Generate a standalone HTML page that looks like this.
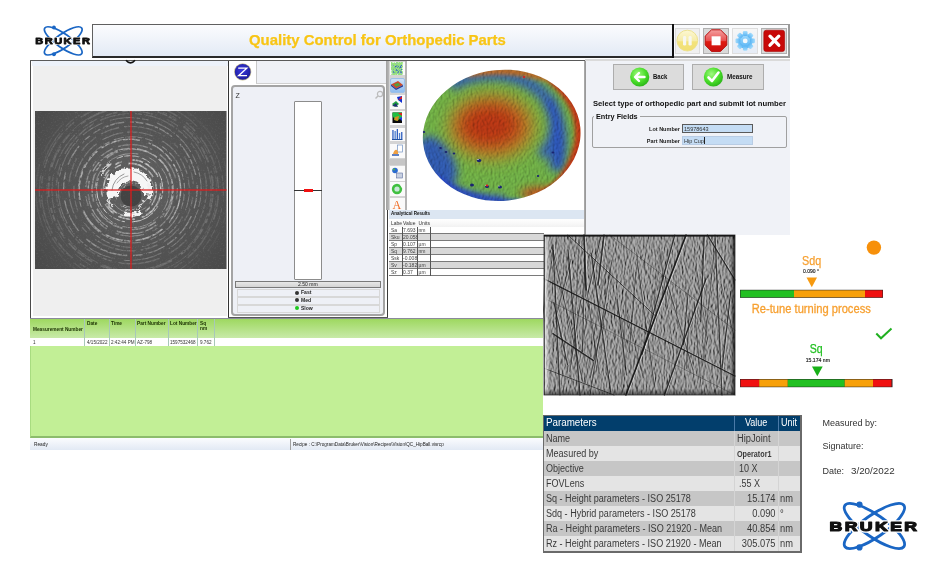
<!DOCTYPE html>
<html><head><meta charset="utf-8">
<style>
*{margin:0;padding:0;box-sizing:border-box}
html,body{width:950px;height:574px;overflow:hidden;background:#fff;font-family:"Liberation Sans",sans-serif;position:relative}
body{will-change:transform}
.a{position:absolute}
.t{position:absolute;white-space:nowrap;line-height:1}
</style></head><body>

<svg width="0" height="0" style="position:absolute"><defs>
<symbol id="brk" viewBox="0 0 96 54">
<g fill="none" stroke="#1a66c4">
<ellipse cx="48.4" cy="27" rx="36" ry="11" transform="rotate(35 48.4 27)" stroke-width="2.8"/>
<ellipse cx="48.4" cy="27" rx="36" ry="11" transform="rotate(-35 48.4 27)" stroke-width="2.8"/>
</g>
<circle cx="33.5" cy="5.6" r="3.1" fill="#1a66c4"/>
<circle cx="33.5" cy="48.4" r="3.1" fill="#1a66c4"/>
<g transform="translate(3.5 31.5) scale(1.3 1)"><text x="0" y="0" font-family="Liberation Sans" font-weight="bold" font-size="13.6" textLength="67.4" lengthAdjust="spacing" fill="#fff" stroke="#fff" stroke-width="3.5">BRUKER</text>
<text x="0" y="0" font-family="Liberation Sans" font-weight="bold" font-size="13.6" textLength="67.4" lengthAdjust="spacing" fill="#111" stroke="#111" stroke-width="1.2" stroke-linejoin="round">BRUKER</text></g>
</symbol></defs></svg>
<!-- top-left logo -->
<svg class="a" style="left:32.6px;top:23.5px" width="60" height="33.75"><use href="#brk"/></svg>

<!-- title bar -->
<div class="a" style="left:92px;top:24px;width:581px;height:34px;border:1px solid #606060;border-bottom:2px solid #2a2a2a;border-right:none;background:linear-gradient(#fbfcfe,#e3eaf5)"></div>
<div class="t" style="left:249px;top:31.6px;font-size:15.3px;font-weight:bold;color:#f8c515;-webkit-text-stroke:0.25px #f8c515;transform:scaleX(0.975);transform-origin:left">Quality Control for Orthopedic Parts</div>

<!-- toolbar -->
<div class="a" style="left:673px;top:24px;width:117px;height:34px;border:1px solid #9a9a9a;border-width:1px 2px 2px 0;background:#fafbfd"></div>
<div class="a" style="left:672px;top:24px;width:2px;height:34px;background:#111"></div>
<div class="a" style="left:674.5px;top:28px;width:25.5px;height:25.5px;background:#f0f0f0;border:1px solid #dcdcdc"></div>
<div class="a" style="left:703px;top:28px;width:26px;height:25.5px;background:#d9d9d9;border:1px solid #b0b0b0"></div>
<div class="a" style="left:732px;top:28px;width:26px;height:25.5px;background:linear-gradient(#f6f6f6,#e6ecf6);border:1px solid #dedede"></div>
<div class="a" style="left:761px;top:28px;width:25.5px;height:25.5px;background:#d9d9d9;border:1px solid #b0b0b0"></div>
<svg class="a" style="left:672px;top:24px" width="118" height="34" viewBox="672 24 118 34">
<defs>
<linearGradient id="gy" x1="0" y1="0" x2="0" y2="1"><stop offset="0" stop-color="#fdf8d4"/><stop offset="0.5" stop-color="#f6eca8"/><stop offset="0.56" stop-color="#f3e37c"/><stop offset="1" stop-color="#f1df74"/></linearGradient>
<linearGradient id="gr" x1="0" y1="0" x2="0" y2="1"><stop offset="0" stop-color="#f4a0a0"/><stop offset="0.5" stop-color="#e85050"/><stop offset="0.55" stop-color="#e01a10"/><stop offset="1" stop-color="#c81010"/></linearGradient>
</defs>
<circle cx="687.3" cy="40.6" r="10.4" fill="url(#gy)" stroke="#ece088" stroke-width="0.9"/>
<rect x="683" y="36" width="3.2" height="9.6" rx="1.4" fill="#f7f7f0"/>
<rect x="688.5" y="36" width="3.2" height="9.6" rx="1.4" fill="#f7f7f0"/>
<polygon points="711.5,29.8 720.5,29.8 726.8,36.1 726.8,45.1 720.5,51.4 711.5,51.4 705.2,45.1 705.2,36.1" fill="url(#gr)" stroke="#b81010" stroke-width="1"/>
<rect x="711.6" y="36.3" width="9" height="9" fill="#fff"/>
<defs><linearGradient id="gb" x1="0" y1="0" x2="0" y2="1"><stop offset="0" stop-color="#a6dcfc"/><stop offset="1" stop-color="#58b4f4"/></linearGradient></defs>
<g transform="translate(745.2 40.9)" fill="url(#gb)">
<circle r="7.4"/>
<g id="tooth"><rect x="-2.3" y="-9.8" width="4.6" height="5" rx="1.1"/></g>
<use href="#tooth" transform="rotate(45)"/><use href="#tooth" transform="rotate(90)"/><use href="#tooth" transform="rotate(135)"/><use href="#tooth" transform="rotate(180)"/><use href="#tooth" transform="rotate(225)"/><use href="#tooth" transform="rotate(270)"/><use href="#tooth" transform="rotate(315)"/>
</g>
<circle cx="745.2" cy="40.9" r="2.4" fill="#f4f8fc"/>
<rect x="763.8" y="30.2" width="20.8" height="21.4" rx="2.5" fill="#c80808" stroke="#a80000" stroke-width="0.6"/>
<path d="M770 36.2 L778.8 45.2 M778.8 36.2 L770 45.2" stroke="#fff" stroke-width="3.3" stroke-linecap="round"/>
</svg>

<!-- main window -->
<div class="a" style="left:30px;top:60px;width:555px;height:1px;background:#5a5a5a"></div>
<div class="a" style="left:585px;top:59px;width:205px;height:2px;background:#dadada"></div>

<!-- left panel -->
<div class="a" style="left:30px;top:61px;width:198px;height:257px;background:#fff;border-left:1.5px solid #4a4a4a"></div>
<div class="a" style="left:32px;top:61px;width:196px;height:5px;background:#edf2fa"></div>
<div class="a" style="left:33px;top:66px;width:194px;height:250px;background:#efefef"></div>
<svg class="a" style="left:124px;top:58px" width="13" height="8"><path d="M2 2.2 Q6.5 7.5 11 2.2" fill="none" stroke="#111" stroke-width="1.7"/></svg>
<svg class="a" style="left:34px;top:110px" width="193" height="160" viewBox="34 110 193 160">
<defs>
<radialGradient id="mg" cx="131" cy="188" r="120" gradientUnits="userSpaceOnUse">
<stop offset="0" stop-color="#5a5a5a"/><stop offset="0.4" stop-color="#555"/><stop offset="0.75" stop-color="#505050"/><stop offset="1" stop-color="#4a4a4a"/></radialGradient>
<radialGradient id="rg" cx="131" cy="190" r="5.5" gradientUnits="userSpaceOnUse" spreadMethod="repeat">
<stop offset="0" stop-color="#fff" stop-opacity="0"/><stop offset="0.45" stop-color="#fff" stop-opacity="0.05"/><stop offset="0.7" stop-color="#fff" stop-opacity="0.9"/><stop offset="0.85" stop-color="#fff" stop-opacity="0.2"/><stop offset="1" stop-color="#fff" stop-opacity="0"/></radialGradient>
<radialGradient id="fade" cx="131" cy="190" r="100" gradientUnits="userSpaceOnUse">
<stop offset="0" stop-color="#fff"/><stop offset="0.3" stop-color="#e0e0e0"/><stop offset="0.55" stop-color="#909090"/><stop offset="0.8" stop-color="#404040"/><stop offset="1" stop-color="#101010"/></radialGradient>
<filter id="spk" x="0" y="0" width="100%" height="100%"><feTurbulence type="fractalNoise" baseFrequency="0.3" numOctaves="3" seed="9"/><feColorMatrix values="2.6 0 0 0 -0.8  2.6 0 0 0 -0.8  2.6 0 0 0 -0.8  0 0 0 0 1"/></filter>
<mask id="spm" maskUnits="userSpaceOnUse" x="35" y="111" width="192" height="158"><rect x="35" y="111" width="192" height="158" filter="url(#spk)"/></mask>
<mask id="fdm" maskUnits="userSpaceOnUse" x="35" y="111" width="192" height="158"><rect x="35" y="111" width="192" height="158" fill="url(#fade)"/></mask>
<filter id="nz" x="0" y="0" width="100%" height="100%"><feTurbulence type="fractalNoise" baseFrequency="0.6" numOctaves="2" seed="3"/><feColorMatrix values="0 0 0 0 1  0 0 0 0 1  0 0 0 0 1  0 0 0 1.4 -0.75"/></filter>
<filter id="sb"><feGaussianBlur stdDeviation="0.5"/></filter>
<filter id="sb2" x="-50%" y="-50%" width="200%" height="200%"><feGaussianBlur stdDeviation="6"/></filter>
</defs>
<rect x="35" y="111" width="191.5" height="158" fill="url(#mg)"/>
<circle cx="131" cy="188" r="45" fill="#7a7a7a" opacity="0.15" filter="url(#sb2)"/>
<g mask="url(#fdm)" opacity="0.9"><g mask="url(#spm)"><g fill="none" stroke="#fff" filter="url(#sb)"><circle cx="131.7" cy="189.1" r="18.0" stroke-width="0.93" opacity="0.74" stroke-dasharray="9 5 9 2 17 3 18 9 7 8 11 10" stroke-dashoffset="42"/><circle cx="131.7" cy="190.5" r="22.2" stroke-width="0.69" opacity="0.70" stroke-dasharray="33 11 13 5 36 12 10 3 35 5 21 11" stroke-dashoffset="43"/><circle cx="129.9" cy="189.9" r="26.5" stroke-width="1.57" opacity="0.82" stroke-dasharray="29 3 41 11 20 8 7 7 30 5 22 10" stroke-dashoffset="4"/><circle cx="131.2" cy="189.6" r="29.7" stroke-width="1.66" opacity="0.81" stroke-dasharray="7 11 32 7 17 5 13 8 8 11 10 8" stroke-dashoffset="14"/><circle cx="129.7" cy="188.9" r="33.2" stroke-width="1.00" opacity="0.99" stroke-dasharray="31 7 32 7 12 2 44 10 10 8 37 11" stroke-dashoffset="20"/><circle cx="132.0" cy="190.6" r="37.1" stroke-width="0.70" opacity="0.85" stroke-dasharray="35 6 39 6 39 6 22 6 34 11 9 8" stroke-dashoffset="12"/><circle cx="132.2" cy="189.2" r="40.3" stroke-width="1.66" opacity="0.61" stroke-dasharray="43 6 26 9 33 8 40 8 42 9 29 3" stroke-dashoffset="11"/><circle cx="130.7" cy="191.0" r="42.6" stroke-width="1.35" opacity="0.69" stroke-dasharray="31 10 43 10 39 6 8 10 45 7 41 8" stroke-dashoffset="3"/><circle cx="131.5" cy="190.4" r="45.8" stroke-width="1.44" opacity="0.54" stroke-dasharray="28 6 15 6 35 9 29 10 22 8 10 9" stroke-dashoffset="40"/><circle cx="129.9" cy="190.1" r="50.8" stroke-width="1.47" opacity="0.99" stroke-dasharray="32 5 40 9 30 3 28 5 28 11 21 2" stroke-dashoffset="42"/><circle cx="131.5" cy="189.9" r="53.1" stroke-width="1.09" opacity="0.67" stroke-dasharray="23 8 26 5 40 10 41 3 27 4 10 11" stroke-dashoffset="38"/><circle cx="131.6" cy="189.7" r="57.7" stroke-width="1.16" opacity="0.55" stroke-dasharray="41 7 22 4 26 11 42 3 11 12 26 8" stroke-dashoffset="20"/><circle cx="131.1" cy="188.6" r="62.3" stroke-width="1.35" opacity="0.51" stroke-dasharray="7 10 29 9 25 9 20 6 19 5 43 11" stroke-dashoffset="46"/><circle cx="130.4" cy="188.8" r="66.8" stroke-width="1.37" opacity="0.98" stroke-dasharray="35 8 19 8 22 4 12 3 33 6 45 11" stroke-dashoffset="42"/><circle cx="129.7" cy="189.0" r="71.4" stroke-width="1.04" opacity="0.88" stroke-dasharray="43 6 23 8 39 9 45 3 10 3 43 5" stroke-dashoffset="1"/><circle cx="131.4" cy="188.7" r="75.1" stroke-width="1.36" opacity="0.64" stroke-dasharray="7 2 33 2 15 6 22 11 42 7 30 6" stroke-dashoffset="9"/><circle cx="131.5" cy="190.7" r="79.6" stroke-width="1.15" opacity="0.75" stroke-dasharray="38 9 13 7 39 5 43 4 21 4 17 4" stroke-dashoffset="44"/><circle cx="130.8" cy="189.2" r="82.2" stroke-width="1.79" opacity="0.84" stroke-dasharray="17 9 30 6 17 3 14 11 21 9 23 4" stroke-dashoffset="21"/><circle cx="131.8" cy="190.9" r="84.9" stroke-width="0.76" opacity="0.90" stroke-dasharray="18 9 42 11 39 7 26 2 32 7 19 11" stroke-dashoffset="17"/><circle cx="129.9" cy="190.8" r="88.5" stroke-width="1.53" opacity="0.95" stroke-dasharray="25 9 28 4 40 7 13 8 39 4 12 8" stroke-dashoffset="30"/><circle cx="131.4" cy="191.0" r="92.1" stroke-width="1.14" opacity="0.99" stroke-dasharray="18 8 23 12 21 2 23 7 35 8 41 4" stroke-dashoffset="44"/><circle cx="132.3" cy="191.0" r="96.5" stroke-width="1.39" opacity="0.71" stroke-dasharray="42 9 23 11 40 12 43 11 22 6 44 2" stroke-dashoffset="9"/></g></g></g>
<rect x="35" y="111" width="191.5" height="158" filter="url(#nz)" opacity="0.15"/>
<filter id="rag" x="-20%" y="-20%" width="140%" height="140%"><feTurbulence type="fractalNoise" baseFrequency="0.3" numOctaves="2" seed="2" result="t"/><feDisplacementMap in="SourceGraphic" in2="t" scale="6" xChannelSelector="R" yChannelSelector="G"/><feGaussianBlur stdDeviation="0.4"/></filter>
<circle cx="131" cy="196" r="10.5" fill="#2e2e2e" opacity="0.55" filter="url(#sb)"/>
<g filter="url(#rag)">
<path d="M108.4 198.9 A23 22 0 1 1 151.7 194.6 L143.0 194.0 A12 12 0 1 0 119.4 196.1 Z" fill="#f6f6f6"/>
<path d="M147 183 Q153 190 149 199" fill="none" stroke="#f0f0f0" stroke-width="3"/>
<path d="M124 213 A17 17 0 0 0 141 212" fill="none" stroke="#f4f4f4" stroke-width="3.2"/>
<path d="M121 205 A13 13 0 0 0 141 206" fill="none" stroke="#e0e0e0" stroke-width="1.2" opacity="0.7"/>
<path d="M144 200 A15 15 0 0 1 138 208" fill="none" stroke="#e8e8e8" stroke-width="1.6" opacity="0.8"/>
<path d="M101 175 A31 31 0 0 1 111 164" fill="none" stroke="#e8e8e8" stroke-width="2" opacity="0.8"/>
<path d="M113 207 A22 22 0 0 1 108 199" fill="none" stroke="#eee" stroke-width="2.2" opacity="0.85"/>
<path d="M123 188 A9 9 0 0 1 136 183" fill="none" stroke="#bbb" stroke-width="1" opacity="0.6"/>
</g>
<g fill="none" stroke="#666" stroke-linecap="round" opacity="0.75"><path d="M112 190 A19 19 0 0 1 124 174" stroke-width="0.9"/><path d="M134 172 A19 19 0 0 1 147 181" stroke-width="0.8"/><path d="M117 183 A16 16 0 0 1 128 176" stroke-width="0.7"/></g>
<rect x="130.4" y="111" width="1.2" height="158" fill="#e41a1a"/>
<rect x="35" y="189.4" width="191.5" height="1.2" fill="#e41a1a"/>
</svg>

<!-- Z panel -->
<div class="a" style="left:228px;top:61px;width:159px;height:257px;background:#fff;border-left:1.5px solid #333"></div>
<div class="a" style="left:256px;top:61px;width:131px;height:23px;background:#eff1f6;border-left:1px solid #c8c8c8;border-bottom:1px solid #d0d0d0"></div>
<div class="a" style="left:231px;top:85px;width:154px;height:231px;background:#eef0f6;border:2px solid #a4a4a4;border-radius:4px"></div>
<svg class="a" style="left:233px;top:62px" width="20" height="20" viewBox="233 62 20 20">
<defs><radialGradient id="zg" cx="0.45" cy="0.4" r="0.6"><stop offset="0" stop-color="#3a3ae0"/><stop offset="1" stop-color="#1c1c9a"/></radialGradient></defs>
<circle cx="242.7" cy="71.9" r="8.6" fill="#c8c090"/>
<circle cx="242.7" cy="71.9" r="7.9" fill="url(#zg)"/>
<path d="M238.2 68.2 H246.8 L238.6 75.7 H247" fill="none" stroke="#fff" stroke-width="1.3"/>
</svg>
<div class="t" style="left:235.5px;top:91.5px;font-size:7px;color:#333">Z</div>
<svg class="a" style="left:374px;top:90px" width="10" height="10"><circle cx="6" cy="4" r="2.6" fill="none" stroke="#bbb" stroke-width="1.2"/><path d="M4 6 L1.5 8.5" stroke="#bbb" stroke-width="1.5"/></svg>
<div class="a" style="left:294px;top:101px;width:28px;height:179px;background:#fff;border:1.5px solid #8c8c8c;border-radius:1px"></div>
<div class="a" style="left:294px;top:189.5px;width:28px;height:1.3px;background:#333"></div>
<div class="a" style="left:303.6px;top:188.6px;width:9px;height:3px;background:#f01010"></div>
<div class="a" style="left:235px;top:280.5px;width:146px;height:7.5px;background:linear-gradient(#e8e8e8,#d4d4d4);border:1px solid #7a7a7a"></div>
<div class="t" style="left:297.5px;top:281.6px;font-size:5.5px;color:#222;transform:scaleX(0.92);transform-origin:left">2.50 mm</div>
<div class="a" style="left:237px;top:289px;width:143px;height:7.5px;background:#eef0f6;border:1px solid #d8d8d8"></div>
<div class="a" style="left:237px;top:297px;width:143px;height:7.5px;background:#eef0f6;border:1px solid #d8d8d8"></div>
<div class="a" style="left:237px;top:305px;width:143px;height:7.5px;background:#eef0f6;border:1px solid #d8d8d8"></div>
<div class="a" style="left:294.5px;top:290.6px;width:4px;height:4px;border-radius:50%;background:#333"></div>
<div class="a" style="left:294.5px;top:298.4px;width:4px;height:4px;border-radius:50%;background:#333"></div>
<div class="a" style="left:294.5px;top:306.4px;width:4px;height:4px;border-radius:50%;background:#1ec81e"></div>
<div class="t" style="left:300.5px;top:290.4px;font-size:5.5px;font-weight:bold;color:#222;transform:scaleX(0.92);transform-origin:left">Fast</div>
<div class="t" style="left:300.5px;top:298.2px;font-size:5.5px;font-weight:bold;color:#222;transform:scaleX(0.92);transform-origin:left">Med</div>
<div class="t" style="left:300.5px;top:306.2px;font-size:5.5px;font-weight:bold;color:#222;transform:scaleX(0.92);transform-origin:left">Slow</div>

<!-- 3D / results -->
<div class="a" style="left:386.5px;top:61px;width:1.5px;height:257px;background:#3a3a3a"></div>
<div class="a" style="left:228px;top:317px;width:160px;height:1.5px;background:#555"></div>
<div class="a" style="left:388px;top:61px;width:197px;height:257px;background:#fff"></div>
<div class="a" style="left:386px;top:61px;width:3.3px;height:149px;background:linear-gradient(90deg,#a0a0a0,#b8b8b8)"></div>
<div class="a" style="left:389.3px;top:61px;width:15.4px;height:149px;background:#d4d4d4"></div>
<div class="a" style="left:404.5px;top:61px;width:2.4px;height:149px;background:#b4b4b4"></div>
<div class="a" style="left:389.5px;top:62.3px;width:15px;height:12.5px;background:#fafafa"></div>
<div class="a" style="left:389.5px;top:77.5px;width:15px;height:15.3px;background:linear-gradient(#cfe2f8,#8fbcee);border:1px solid #9cc0e8;border-radius:2px"></div>
<div class="a" style="left:389.5px;top:94.6px;width:15px;height:14.6px;background:#fafafa"></div>
<div class="a" style="left:389.5px;top:111px;width:15px;height:13.5px;background:#fafafa"></div>
<div class="a" style="left:389.5px;top:127.5px;width:15px;height:13.5px;background:#fafafa"></div>
<div class="a" style="left:389.5px;top:143.5px;width:15px;height:14.4px;background:#fafafa"></div>
<div class="a" style="left:389.3px;top:158.7px;width:15.4px;height:6px;background:#c6c6c6"></div>
<div class="a" style="left:389.5px;top:166.3px;width:15px;height:14.3px;background:#fafafa"></div>
<div class="a" style="left:389.5px;top:182.3px;width:15px;height:13.5px;background:#fafafa"></div>
<div class="a" style="left:389.5px;top:197.5px;width:15px;height:12px;background:#fafafa"></div>
<svg class="a" style="left:389px;top:61px" width="16" height="149" viewBox="389 61 16 149">
<defs><filter id="nz2"><feTurbulence type="turbulence" baseFrequency="0.8" numOctaves="1" seed="7"/><feColorMatrix values="0 0 0 0 0.3  0 0 0 0 0.75  0 0 0 0 0.2  0 0 0 -2.5 1.3"/></filter></defs>
<rect x="392.5" y="63.5" width="9.5" height="10" fill="#2848d8"/>
<rect x="392.5" y="63.5" width="9.5" height="10" filter="url(#nz2)"/>
<path d="M391 84.5 L398 81 L403 85 L396 88.5Z" fill="#d04828"/><path d="M394 84.6 L398 82.8 L400.5 85 L396.5 86.8Z" fill="#50a040"/><path d="M391 84.5 L396 88.5 L403 85 L403 86.4 L396 90 L391 86Z" fill="#2a3a90"/>
<path d="M397 97 L402 96 L402 103 L398 100Z" fill="#1030d0"/><path d="M398 100 L402 96 L402 99Z" fill="#e02020"/><path d="M392 104 L396 101 L399 104 L395 107Z" fill="#20a040"/><path d="M392 106 L396 103 L398 107Z" fill="#203070"/>
<rect x="392.5" y="112.5" width="9.5" height="10.5" fill="#0a0a0a"/><path d="M392.5 112.5 H402 V118 L396 121 L392.5 116Z" fill="#20c040"/><path d="M398 113 L402 113 L402 116Z" fill="#e02020"/><path d="M395 117 L399 116 L398 121 L394 120Z" fill="#d09020"/><path d="M399 118 L402 117 V121Z" fill="#2040e0"/>
<rect x="392.3" y="130" width="1.3" height="9" fill="#3060c0"/><rect x="394.5" y="131" width="1.3" height="8" fill="#5080d0"/><rect x="396.7" y="129" width="1.3" height="10" fill="#3060c0"/><rect x="398.9" y="133" width="1.3" height="6" fill="#5080d0"/><rect x="401.1" y="132" width="1.3" height="7" fill="#3060c0"/><rect x="392" y="139" width="10.5" height="1" fill="#2050a0"/>
<rect x="397.5" y="145" width="5" height="7" fill="#fff" stroke="#7090c0" stroke-width="0.7"/><path d="M393 154 Q394.5 149 397 150 Q399 152 398 155Z" fill="#f0a040"/><rect x="392" y="154" width="7" height="2" fill="#6080c0"/>
<circle cx="395" cy="170.5" r="2.8" fill="#2a6ad0"/><circle cx="394" cy="169.5" r="1.1" fill="#50b050"/><rect x="396.5" y="173" width="6" height="5" fill="#c8d0e0" stroke="#6070a0" stroke-width="0.6"/>
<circle cx="397" cy="189" r="5.2" fill="#40c040"/><circle cx="397" cy="189" r="2.6" fill="#c8e8d8"/><path d="M400 185 L403 184 L402 188Z" fill="#fafafa"/>
<text x="392.6" y="208.5" font-family="Liberation Serif" font-size="12" fill="#f06a20">A</text>
</svg>
<svg class="a" style="left:407px;top:61px" width="177" height="149" viewBox="407 61 177 149">
<defs>
<clipPath id="dk"><ellipse cx="501.7" cy="135.3" rx="79" ry="65.5" transform="rotate(-6 501.7 135.3)"/></clipPath>
<filter id="bl8" x="-30%" y="-30%" width="160%" height="160%"><feGaussianBlur stdDeviation="8"/></filter>
<filter id="bl4" x="-30%" y="-30%" width="160%" height="160%"><feGaussianBlur stdDeviation="4"/></filter>
<filter id="bl2" x="-30%" y="-30%" width="160%" height="160%"><feGaussianBlur stdDeviation="2"/></filter>
<filter id="nz3" x="0" y="0" width="100%" height="100%" color-interpolation-filters="sRGB"><feTurbulence type="fractalNoise" baseFrequency="0.5 0.3" numOctaves="2" seed="11" result="n"/><feDiffuseLighting in="n" surfaceScale="1.5" lighting-color="#fff"><feDistantLight azimuth="200" elevation="50"/></feDiffuseLighting></filter>
</defs>
<g clip-path="url(#dk)">
<rect x="407" y="61" width="177" height="149" fill="#78bc4c"/>
<g filter="url(#bl4)">
<path d="M450.9 85.7 A64 50 0 0 1 541 156.1" fill="none" stroke="#3464c0" stroke-width="13" opacity="0.9"/>
<path d="M548 100 Q566 130 556 170" fill="none" stroke="#2e58c8" stroke-width="14"/>
<ellipse cx="437" cy="162" rx="17" ry="28" transform="rotate(-30 437 162)" fill="#2e56c8" opacity="0.9"/>
<path d="M425 175 Q460 200 505 200" fill="none" stroke="#3058c8" stroke-width="8"/>
<ellipse cx="540" cy="193" rx="20" ry="6" fill="#c85a20"/>
</g>
<g filter="url(#bl8)">
<ellipse cx="492" cy="127" rx="46" ry="35" fill="#a8a830"/>
<ellipse cx="491" cy="126" rx="39" ry="29" fill="#cc6420"/>
<ellipse cx="489" cy="125" rx="29" ry="21" fill="#c43a12"/>
</g>
<g filter="url(#bl2)">
<path d="M552 76 Q592 108 582 152 Q572 192 525 205 L527 199 Q565 184 574 144 Q580 108 548 82Z" fill="#d23a18"/>
<path d="M465 71 Q510 62 552 76 L548 82 Q508 70 468 77Z" fill="#cc7028"/>
</g>
<path d="M432 178 Q470 206 520 204 L520 199 Q470 201 435 173Z" fill="#2a48d0" filter="url(#bl2)"/>
<rect x="407" y="61" width="177" height="149" filter="url(#nz3)" opacity="0.35" style="mix-blend-mode:multiply"/>
</g>
<g fill="#1a2470">
<ellipse cx="479" cy="160.5" rx="2.2" ry="1.7"/><ellipse cx="472" cy="185" rx="2" ry="1.5"/><ellipse cx="487" cy="186.5" rx="2" ry="1.5"/><ellipse cx="500" cy="187" rx="2" ry="1.6"/><ellipse cx="440.5" cy="148" rx="1.4" ry="1.1"/><ellipse cx="446" cy="152" rx="1.3" ry="1"/><ellipse cx="454" cy="153.5" rx="1.3" ry="1"/><ellipse cx="553" cy="152.5" rx="1.4" ry="1"/><ellipse cx="538" cy="176" rx="1.2" ry="0.9"/><ellipse cx="424" cy="132" rx="1.2" ry="1"/>
</g>
<g fill="#fff" opacity="0.7"><ellipse cx="478" cy="159.5" rx="1" ry="0.6"/><ellipse cx="486" cy="185.5" rx="0.9" ry="0.5"/><ellipse cx="499" cy="186" rx="0.9" ry="0.5"/></g>
<ellipse cx="487" cy="185.5" rx="1.3" ry="1" fill="#e02020"/><ellipse cx="524" cy="77" rx="1.3" ry="1" fill="#d02020"/>
</svg>
<div class="a" style="left:584px;top:61px;width:1px;height:174px;background:#a8a8a8"></div>
<div class="a" style="left:389px;top:209.5px;width:195px;height:9.3px;background:#dce6f2"></div>
<div class="t" style="left:390.8px;top:211.2px;font-size:5.4px;font-weight:bold;color:#111;transform:scaleX(0.84);transform-origin:left">Analytical Results</div>

<div class="a" style="left:389px;top:218.8px;width:195px;height:8px;background:linear-gradient(#fff,#f2f2f2)"></div>
<div class="t" style="left:391px;top:220.5px;font-size:5px;color:#333">Labe</div><div class="t" style="left:403px;top:220.5px;font-size:5px;color:#333">Value</div><div class="t" style="left:418.5px;top:220.5px;font-size:5px;color:#333">Units</div>
<div class="a" style="left:389px;top:227px;width:155px;height:7px;background:#fff;border-bottom:1px solid #7a7a7a"></div>
<div class="t" style="left:391px;top:228.2px;font-size:5px;color:#444">Sa</div><div class="t" style="left:403px;top:228.2px;font-size:5px;color:#444">7.693</div><div class="t" style="left:418.5px;top:228.2px;font-size:5px;color:#444">nm</div>
<div class="a" style="left:389px;top:234px;width:155px;height:7px;background:#d8d8d8;border-bottom:1px solid #7a7a7a"></div>
<div class="t" style="left:391px;top:235.2px;font-size:5px;color:#444">Sku</div><div class="t" style="left:403px;top:235.2px;font-size:5px;color:#444">20.058</div><div class="t" style="left:418.5px;top:235.2px;font-size:5px;color:#444"></div>
<div class="a" style="left:389px;top:241px;width:155px;height:7px;background:#fff;border-bottom:1px solid #7a7a7a"></div>
<div class="t" style="left:391px;top:242.2px;font-size:5px;color:#444">Sp</div><div class="t" style="left:403px;top:242.2px;font-size:5px;color:#444">0.107</div><div class="t" style="left:418.5px;top:242.2px;font-size:5px;color:#444">µm</div>
<div class="a" style="left:389px;top:248px;width:155px;height:7px;background:#d8d8d8;border-bottom:1px solid #7a7a7a"></div>
<div class="t" style="left:391px;top:249.2px;font-size:5px;color:#444">Sq</div><div class="t" style="left:403px;top:249.2px;font-size:5px;color:#444">9.762</div><div class="t" style="left:418.5px;top:249.2px;font-size:5px;color:#444">nm</div>
<div class="a" style="left:389px;top:255px;width:155px;height:7px;background:#fff;border-bottom:1px solid #7a7a7a"></div>
<div class="t" style="left:391px;top:256.2px;font-size:5px;color:#444">Ssk</div><div class="t" style="left:403px;top:256.2px;font-size:5px;color:#444">-0.008</div><div class="t" style="left:418.5px;top:256.2px;font-size:5px;color:#444"></div>
<div class="a" style="left:389px;top:262px;width:155px;height:7px;background:#d8d8d8;border-bottom:1px solid #7a7a7a"></div>
<div class="t" style="left:391px;top:263.2px;font-size:5px;color:#444">Sv</div><div class="t" style="left:403px;top:263.2px;font-size:5px;color:#444">-0.182</div><div class="t" style="left:418.5px;top:263.2px;font-size:5px;color:#444">µm</div>
<div class="a" style="left:389px;top:269px;width:155px;height:7px;background:#fff;border-bottom:1px solid #7a7a7a"></div>
<div class="t" style="left:391px;top:270.2px;font-size:5px;color:#444">Sz</div><div class="t" style="left:403px;top:270.2px;font-size:5px;color:#444">0.37</div><div class="t" style="left:418.5px;top:270.2px;font-size:5px;color:#444">µm</div>
<div class="a" style="left:401.5px;top:227px;width:1px;height:49px;background:#555"></div><div class="a" style="left:417px;top:227px;width:1px;height:49px;background:#555"></div><div class="a" style="left:430px;top:227px;width:1px;height:49px;background:#555"></div>

<!-- right panel -->
<div class="a" style="left:585px;top:61px;width:205px;height:174px;background:#f0f2f7;border-left:1px solid #9a9a9a"></div>
<div class="a" style="left:612.5px;top:64px;width:71.5px;height:26px;background:#dcdcdc;border:1px solid #adadad"></div>
<div class="a" style="left:692px;top:64px;width:71.5px;height:26px;background:#dcdcdc;border:1px solid #adadad"></div>
<svg class="a" style="left:628px;top:65px" width="100" height="24" viewBox="628 65 100 24">
<defs><radialGradient id="gg" cx="0.4" cy="0.35" r="0.7"><stop offset="0" stop-color="#a0fa80"/><stop offset="0.6" stop-color="#48dc28"/><stop offset="1" stop-color="#28b018"/></radialGradient></defs>
<circle cx="639.7" cy="77" r="9.6" fill="url(#gg)"/>
<path d="M644.5 77 H635.5 M639 73 L635 77 L639 81" fill="none" stroke="#fff" stroke-width="2.4" stroke-linecap="round" stroke-linejoin="round"/>
<circle cx="713.4" cy="77" r="9.6" fill="url(#gg)"/>
<path d="M708.5 77.5 L712 81 L718.5 72.5" fill="none" stroke="#fff" stroke-width="2.6" stroke-linecap="round" stroke-linejoin="round"/>
</svg>
<div class="t" style="left:653.4px;top:74.3px;font-size:6.8px;font-weight:bold;color:#111;transform:scaleX(0.88);transform-origin:left">Back</div>
<div class="t" style="left:727px;top:74.3px;font-size:6.8px;font-weight:bold;color:#111;transform:scaleX(0.92);transform-origin:left">Measure</div>
<div class="t" style="left:593.4px;top:99.5px;font-size:8px;font-weight:bold;color:#111;transform:scaleX(0.958);transform-origin:left">Select type of orthopedic part and submit lot number</div>
<div class="a" style="left:592px;top:116px;width:195px;height:31.5px;border:1px solid #a0a0a0;border-radius:2px"></div>
<div class="a" style="left:594px;top:110px;width:46px;height:10px;background:#f0f2f7"></div>
<div class="t" style="left:596.3px;top:113px;font-size:8px;font-weight:bold;color:#111;transform:scaleX(0.91);transform-origin:left">Entry Fields</div>
<div class="t" style="left:600px;top:125.8px;width:80px;text-align:right;font-size:6px;font-weight:bold;color:#222;transform:scaleX(0.92);transform-origin:right">Lot Number</div>
<div class="t" style="left:600px;top:137.8px;width:80px;text-align:right;font-size:6px;font-weight:bold;color:#222;transform:scaleX(0.92);transform-origin:right">Part Number</div>
<div class="a" style="left:682px;top:123.8px;width:71px;height:9px;background:#c4dcf4;border:1px solid #5a5a5a"></div>
<div class="a" style="left:682px;top:135.5px;width:71px;height:9.3px;background:#c4dcf4;border:1px solid #b8cce4"></div>
<div class="t" style="left:683.5px;top:125.8px;font-size:6px;color:#333;transform:scaleX(0.92);transform-origin:left">15978643</div>
<div class="t" style="left:683.5px;top:137.8px;font-size:6px;color:#333;transform:scaleX(0.92);transform-origin:left">Hip Cup</div>
<div class="a" style="left:703.5px;top:136.5px;width:0.8px;height:7px;background:#222"></div>

<!-- green table -->
<div class="a" style="left:30px;top:318px;width:513px;height:1px;background:#8a8a9a"></div>
<div class="a" style="left:30px;top:319px;width:513px;height:19px;background:linear-gradient(#9ed860,#c8eaa8)"></div>
<div class="a" style="left:30px;top:338px;width:513px;height:8px;background:#fff"></div>
<div class="a" style="left:30px;top:346px;width:513px;height:92px;background:#c2ef96;border-bottom:2px solid #8cbc6c;border-left:1px solid #a8dc80"></div>
<div class="a" style="left:30px;top:438px;width:513px;height:12px;background:linear-gradient(#fbfcfe,#e2e9f4)"></div>
<div class="a" style="left:289.5px;top:438.5px;width:1px;height:11px;background:#a0a0a0"></div>
<div class="t" style="left:33.5px;top:442px;font-size:5.2px;color:#222;transform:scaleX(0.92);transform-origin:left">Ready</div>
<div class="t" style="left:292.8px;top:442px;font-size:5.2px;color:#222;transform:scaleX(0.89);transform-origin:left">Recipe : C:\ProgramData\Bruker\Vision\Recipes\Vision\QC_HipBall.visrcp</div>
<div class="a" style="left:84.2px;top:319px;width:0.8px;height:27px;background:#a8c8b8"></div>
<div class="a" style="left:108.8px;top:319px;width:0.8px;height:27px;background:#a8c8b8"></div>
<div class="a" style="left:135px;top:319px;width:0.8px;height:27px;background:#a8c8b8"></div>
<div class="a" style="left:167.5px;top:319px;width:0.8px;height:27px;background:#a8c8b8"></div>
<div class="a" style="left:197.3px;top:319px;width:0.8px;height:27px;background:#a8c8b8"></div>
<div class="a" style="left:214px;top:319px;width:0.8px;height:27px;background:#a8c8b8"></div>
<div class="t" style="left:33px;top:326.5px;font-size:5px;font-weight:bold;color:#1a3000;transform:scaleX(0.95);transform-origin:left">Measurement Number</div>
<div class="t" style="left:86.5px;top:320.5px;font-size:5px;font-weight:bold;color:#1a3000;transform:scaleX(0.95);transform-origin:left">Date</div>
<div class="t" style="left:111px;top:320.5px;font-size:5px;font-weight:bold;color:#1a3000;transform:scaleX(0.95);transform-origin:left">Time</div>
<div class="t" style="left:137px;top:320.5px;font-size:5px;font-weight:bold;color:#1a3000;transform:scaleX(0.95);transform-origin:left">Part Number</div>
<div class="t" style="left:169.5px;top:320.5px;font-size:5px;font-weight:bold;color:#1a3000;transform:scaleX(0.95);transform-origin:left">Lot Number</div>
<div class="t" style="left:200px;top:320.5px;font-size:5px;font-weight:bold;color:#1a3000;transform:scaleX(0.95);transform-origin:left">Sq</div>
<div class="t" style="left:200px;top:326px;font-size:5px;font-weight:bold;color:#1a3000;transform:scaleX(0.95);transform-origin:left">nm</div>
<div class="t" style="left:33px;top:339.5px;font-size:5px;color:#333;transform:scaleX(0.92);transform-origin:left">1</div>
<div class="t" style="left:86.5px;top:339.5px;font-size:5px;color:#333;transform:scaleX(0.92);transform-origin:left">4/15/2022</div>
<div class="t" style="left:111px;top:339.5px;font-size:5px;color:#333;transform:scaleX(0.92);transform-origin:left">2:42:44 PM</div>
<div class="t" style="left:137px;top:339.5px;font-size:5px;color:#333;transform:scaleX(0.92);transform-origin:left">AZ-798</div>
<div class="t" style="left:169.5px;top:339.5px;font-size:5px;color:#333;transform:scaleX(0.92);transform-origin:left">1597532468</div>
<div class="t" style="left:200px;top:339.5px;font-size:5px;color:#333;transform:scaleX(0.92);transform-origin:left">9.762</div>

<!-- scratch image -->
<svg class="a" style="left:543px;top:234px" width="193" height="162" viewBox="543 234 193 162">
<defs>
<filter id="sc" x="0" y="0" width="100%" height="100%" color-interpolation-filters="sRGB"><feTurbulence type="fractalNoise" baseFrequency="0.9 0.2" numOctaves="3" seed="4" result="n"/><feDiffuseLighting in="n" surfaceScale="1.5" diffuseConstant="1" lighting-color="#fff"><feDistantLight azimuth="180" elevation="60"/></feDiffuseLighting><feComponentTransfer><feFuncR type="linear" slope="0.9" intercept="-0.2"/><feFuncG type="linear" slope="0.9" intercept="-0.2"/><feFuncB type="linear" slope="0.9" intercept="-0.2"/></feComponentTransfer></filter>
<linearGradient id="scL" x1="0" x2="1"><stop offset="0" stop-color="#000" stop-opacity="0.7"/><stop offset="0.008" stop-color="#fff" stop-opacity="0.7"/><stop offset="0.03" stop-color="#fff" stop-opacity="0"/><stop offset="0.975" stop-color="#000" stop-opacity="0"/><stop offset="1" stop-color="#000" stop-opacity="0.75"/></linearGradient>
<linearGradient id="scB" x1="0" y1="0" x2="0" y2="1"><stop offset="0.96" stop-color="#000" stop-opacity="0"/><stop offset="1" stop-color="#000" stop-opacity="0.5"/></linearGradient>
</defs>
<rect x="544" y="235" width="191" height="160" fill="#8c8c8c"/>
<rect x="544" y="235" width="191" height="160" filter="url(#sc)"/>
<g stroke="#ffffff" stroke-linecap="round"><line x1="545.6" y1="278.9" x2="736.2" y2="376" stroke-width="0.91" stroke-opacity="0.50"/><line x1="687.4" y1="235" x2="627.3" y2="395" stroke-width="1.12" stroke-opacity="0.52"/><line x1="675.9" y1="235" x2="643.3" y2="354.4" stroke-width="0.84" stroke-opacity="0.44"/><line x1="708.5" y1="235" x2="736.1" y2="280" stroke-width="0.84" stroke-opacity="0.47"/><line x1="568.9" y1="235" x2="656.5" y2="316" stroke-width="0.70" stroke-opacity="0.41"/><line x1="554.2" y1="333.7" x2="594.6" y2="360.4" stroke-width="1.05" stroke-opacity="0.47"/><line x1="707.2" y1="278.9" x2="665.6" y2="395" stroke-width="0.91" stroke-opacity="0.47"/><line x1="585.4" y1="235" x2="587.4" y2="290" stroke-width="1.12" stroke-opacity="0.47"/><line x1="605.3" y1="235" x2="599.3" y2="285" stroke-width="0.98" stroke-opacity="0.44"/><line x1="545.3" y1="368.3" x2="614.9" y2="395" stroke-width="0.70" stroke-opacity="0.39"/><line x1="548.6" y1="300" x2="735.6" y2="395" stroke-width="0.49" stroke-opacity="0.28"/><line x1="610.6" y1="235" x2="735.6" y2="330" stroke-width="0.49" stroke-opacity="0.28"/><line x1="554.1" y1="245" x2="561.1" y2="395" stroke-width="0.84" stroke-opacity="0.39"/><line x1="569.2" y1="250" x2="581.2" y2="395" stroke-width="0.91" stroke-opacity="0.41"/><line x1="612.9" y1="260" x2="590.9" y2="395" stroke-width="0.70" stroke-opacity="0.33"/><line x1="716.1" y1="235" x2="723.1" y2="395" stroke-width="0.84" stroke-opacity="0.39"/><line x1="637.8" y1="259.3" x2="655.1" y2="385.1" stroke-width="0.59" stroke-opacity="0.39"/><line x1="581.6" y1="300.0" x2="570.6" y2="371.4" stroke-width="0.59" stroke-opacity="0.39"/><line x1="731.7" y1="291.3" x2="723.0" y2="368.2" stroke-width="0.73" stroke-opacity="0.44"/><line x1="585.0" y1="272.5" x2="600.3" y2="373.3" stroke-width="0.78" stroke-opacity="0.28"/><line x1="580.2" y1="239.7" x2="575.7" y2="325.2" stroke-width="0.59" stroke-opacity="0.27"/><line x1="696.7" y1="266.2" x2="708.6" y2="342.1" stroke-width="0.50" stroke-opacity="0.33"/><line x1="590.1" y1="304.4" x2="580.2" y2="362.2" stroke-width="0.43" stroke-opacity="0.29"/><line x1="555.0" y1="302.5" x2="568.6" y2="364.7" stroke-width="0.83" stroke-opacity="0.40"/><line x1="608.3" y1="303.1" x2="590.9" y2="377.7" stroke-width="0.52" stroke-opacity="0.44"/><line x1="605.4" y1="274.5" x2="586.0" y2="383.1" stroke-width="0.48" stroke-opacity="0.32"/><line x1="627.5" y1="314.9" x2="644.1" y2="377.8" stroke-width="0.49" stroke-opacity="0.38"/><line x1="714.8" y1="251.6" x2="703.3" y2="365.1" stroke-width="0.46" stroke-opacity="0.41"/><line x1="524.7" y1="291.3" x2="510.6" y2="358.8" stroke-width="0.45" stroke-opacity="0.40"/><line x1="585.6" y1="256.1" x2="583.3" y2="351.7" stroke-width="0.60" stroke-opacity="0.43"/><line x1="571.9" y1="259.2" x2="556.4" y2="319.1" stroke-width="0.70" stroke-opacity="0.30"/><line x1="554.3" y1="250.6" x2="539.9" y2="336.1" stroke-width="0.64" stroke-opacity="0.29"/><line x1="618.2" y1="299.0" x2="627.5" y2="374.8" stroke-width="0.81" stroke-opacity="0.35"/><line x1="738.9" y1="285.7" x2="746.2" y2="340.9" stroke-width="0.44" stroke-opacity="0.27"/><line x1="722.0" y1="284.2" x2="735.1" y2="337.7" stroke-width="0.63" stroke-opacity="0.29"/><line x1="660.0" y1="248.0" x2="668.4" y2="308.4" stroke-width="0.46" stroke-opacity="0.43"/><line x1="668.7" y1="285.5" x2="693.9" y2="370.1" stroke-width="0.66" stroke-opacity="0.35"/><line x1="601.5" y1="237.3" x2="589.1" y2="292.1" stroke-width="0.69" stroke-opacity="0.37"/><line x1="662.9" y1="251.6" x2="651.4" y2="317.8" stroke-width="0.50" stroke-opacity="0.31"/><line x1="694.9" y1="301.8" x2="701.7" y2="386.2" stroke-width="0.51" stroke-opacity="0.36"/><line x1="627.1" y1="291.2" x2="622.3" y2="388.4" stroke-width="0.49" stroke-opacity="0.32"/><line x1="689.2" y1="289.9" x2="684.5" y2="344.7" stroke-width="0.70" stroke-opacity="0.40"/><line x1="690.0" y1="313.1" x2="687.3" y2="368.4" stroke-width="0.62" stroke-opacity="0.34"/><line x1="705.3" y1="235.9" x2="701.8" y2="321.6" stroke-width="0.83" stroke-opacity="0.43"/><line x1="592.2" y1="253.0" x2="611.7" y2="392.1" stroke-width="0.77" stroke-opacity="0.41"/><line x1="553.1" y1="249.0" x2="583.5" y2="381.4" stroke-width="0.55" stroke-opacity="0.42"/><line x1="636.7" y1="272.3" x2="630.1" y2="352.7" stroke-width="0.63" stroke-opacity="0.31"/><line x1="536.8" y1="264.1" x2="513.9" y2="364.9" stroke-width="0.50" stroke-opacity="0.39"/><line x1="547.3" y1="237.1" x2="541.6" y2="385.3" stroke-width="0.81" stroke-opacity="0.29"/><line x1="604.7" y1="246.0" x2="628.1" y2="351.5" stroke-width="0.46" stroke-opacity="0.27"/></g>
<g stroke="#151515" stroke-linecap="round"><line x1="544.4" y1="278.9" x2="735" y2="376" stroke-width="1.3" stroke-opacity="0.9"/><line x1="686" y1="235" x2="625.9" y2="395" stroke-width="1.6" stroke-opacity="0.95"/><line x1="674.8" y1="235" x2="642.2" y2="354.4" stroke-width="1.2" stroke-opacity="0.8"/><line x1="707.4" y1="235" x2="735" y2="280" stroke-width="1.2" stroke-opacity="0.85"/><line x1="568" y1="235" x2="655.6" y2="316" stroke-width="1.0" stroke-opacity="0.75"/><line x1="552.9" y1="333.7" x2="593.3" y2="360.4" stroke-width="1.5" stroke-opacity="0.85"/><line x1="706" y1="278.9" x2="664.4" y2="395" stroke-width="1.3" stroke-opacity="0.85"/><line x1="584" y1="235" x2="586" y2="290" stroke-width="1.6" stroke-opacity="0.85"/><line x1="604" y1="235" x2="598" y2="285" stroke-width="1.4" stroke-opacity="0.8"/><line x1="544.4" y1="368.3" x2="614" y2="395" stroke-width="1.0" stroke-opacity="0.7"/><line x1="548" y1="300" x2="735" y2="395" stroke-width="0.7" stroke-opacity="0.5"/><line x1="610" y1="235" x2="735" y2="330" stroke-width="0.7" stroke-opacity="0.5"/><line x1="553" y1="245" x2="560" y2="395" stroke-width="1.2" stroke-opacity="0.7"/><line x1="568" y1="250" x2="580" y2="395" stroke-width="1.3" stroke-opacity="0.75"/><line x1="612" y1="260" x2="590" y2="395" stroke-width="1.0" stroke-opacity="0.6"/><line x1="715" y1="235" x2="722" y2="395" stroke-width="1.2" stroke-opacity="0.7"/><line x1="637.0" y1="259.3" x2="654.3" y2="385.1" stroke-width="0.85" stroke-opacity="0.7"/><line x1="580.8" y1="300.0" x2="569.8" y2="371.4" stroke-width="0.85" stroke-opacity="0.7"/><line x1="730.8" y1="291.3" x2="722.1" y2="368.2" stroke-width="1.04" stroke-opacity="0.8"/><line x1="584.0" y1="272.5" x2="599.3" y2="373.3" stroke-width="1.12" stroke-opacity="0.5"/><line x1="579.4" y1="239.7" x2="574.9" y2="325.2" stroke-width="0.85" stroke-opacity="0.49"/><line x1="696.1" y1="266.2" x2="708.0" y2="342.1" stroke-width="0.72" stroke-opacity="0.6"/><line x1="589.5" y1="304.4" x2="579.6" y2="362.2" stroke-width="0.62" stroke-opacity="0.53"/><line x1="553.9" y1="302.5" x2="567.5" y2="364.7" stroke-width="1.18" stroke-opacity="0.73"/><line x1="607.6" y1="303.1" x2="590.2" y2="377.7" stroke-width="0.74" stroke-opacity="0.8"/><line x1="604.8" y1="274.5" x2="585.4" y2="383.1" stroke-width="0.68" stroke-opacity="0.59"/><line x1="626.9" y1="314.9" x2="643.5" y2="377.8" stroke-width="0.7" stroke-opacity="0.69"/><line x1="714.2" y1="251.6" x2="702.7" y2="365.1" stroke-width="0.66" stroke-opacity="0.75"/><line x1="524.1" y1="291.3" x2="510.0" y2="358.8" stroke-width="0.65" stroke-opacity="0.73"/><line x1="584.8" y1="256.1" x2="582.5" y2="351.7" stroke-width="0.86" stroke-opacity="0.79"/><line x1="571.0" y1="259.2" x2="555.5" y2="319.1" stroke-width="1.0" stroke-opacity="0.54"/><line x1="553.5" y1="250.6" x2="539.1" y2="336.1" stroke-width="0.91" stroke-opacity="0.53"/><line x1="617.2" y1="299.0" x2="626.5" y2="374.8" stroke-width="1.16" stroke-opacity="0.64"/><line x1="738.3" y1="285.7" x2="745.6" y2="340.9" stroke-width="0.63" stroke-opacity="0.49"/><line x1="721.2" y1="284.2" x2="734.3" y2="337.7" stroke-width="0.9" stroke-opacity="0.53"/><line x1="659.4" y1="248.0" x2="667.8" y2="308.4" stroke-width="0.66" stroke-opacity="0.78"/><line x1="667.9" y1="285.5" x2="693.1" y2="370.1" stroke-width="0.94" stroke-opacity="0.64"/><line x1="600.6" y1="237.3" x2="588.2" y2="292.1" stroke-width="0.98" stroke-opacity="0.67"/><line x1="662.3" y1="251.6" x2="650.8" y2="317.8" stroke-width="0.71" stroke-opacity="0.56"/><line x1="694.2" y1="301.8" x2="701.0" y2="386.2" stroke-width="0.73" stroke-opacity="0.66"/><line x1="626.5" y1="291.2" x2="621.7" y2="388.4" stroke-width="0.7" stroke-opacity="0.59"/><line x1="688.3" y1="289.9" x2="683.6" y2="344.7" stroke-width="1.0" stroke-opacity="0.72"/><line x1="689.2" y1="313.1" x2="686.5" y2="368.4" stroke-width="0.88" stroke-opacity="0.62"/><line x1="704.2" y1="235.9" x2="700.7" y2="321.6" stroke-width="1.18" stroke-opacity="0.78"/><line x1="591.2" y1="253.0" x2="610.7" y2="392.1" stroke-width="1.1" stroke-opacity="0.75"/><line x1="552.4" y1="249.0" x2="582.8" y2="381.4" stroke-width="0.78" stroke-opacity="0.77"/><line x1="635.9" y1="272.3" x2="629.3" y2="352.7" stroke-width="0.9" stroke-opacity="0.56"/><line x1="536.2" y1="264.1" x2="513.3" y2="364.9" stroke-width="0.71" stroke-opacity="0.7"/><line x1="546.3" y1="237.1" x2="540.6" y2="385.3" stroke-width="1.16" stroke-opacity="0.53"/><line x1="604.1" y1="246.0" x2="627.5" y2="351.5" stroke-width="0.66" stroke-opacity="0.49"/></g>
<rect x="544" y="235" width="191" height="160" fill="url(#scL)"/>
<rect x="544" y="235" width="191" height="160" fill="url(#scB)"/>
<rect x="544" y="235" width="191" height="160" fill="none" stroke="#303030" stroke-width="0.8"/><rect x="544" y="235" width="191" height="1.6" fill="#181818"/>
</svg>

<!-- params table -->
<div class="a" style="left:543px;top:415px;width:259px;height:137.5px;background:#6a6a6a"></div>
<div class="a" style="left:544px;top:415.5px;width:256px;height:15px;background:#023e6c"></div>
<div class="a" style="left:734px;top:415.5px;width:1px;height:15px;background:#4a7aa8"></div>
<div class="a" style="left:777.5px;top:415.5px;width:1px;height:15px;background:#4a7aa8"></div>
<div class="t" style="left:546px;top:418px;font-size:10px;color:#fff;transform:scaleX(0.98);transform-origin:left">Parameters</div>
<div class="t" style="left:744.5px;top:418px;font-size:10px;color:#fff;transform:scaleX(0.9);transform-origin:left">Value</div>
<div class="t" style="left:781px;top:418px;font-size:10px;color:#fff;transform:scaleX(0.9);transform-origin:left">Unit</div>
<div class="a" style="left:544px;top:430.5px;width:256px;height:15px;background:#c6c6c6"></div>
<div class="t" style="left:546px;top:433.5px;font-size:10px;color:#3a3a3a;transform:scaleX(0.905);transform-origin:left">Name</div>
<div class="t" style="left:737px;top:433.5px;font-size:10px;color:#3a3a3a;transform:scaleX(0.93);transform-origin:left">HipJoint</div>
<div class="a" style="left:544px;top:445.5px;width:256px;height:15px;background:#e4e4e4"></div>
<div class="t" style="left:546px;top:448.5px;font-size:10px;color:#3a3a3a;transform:scaleX(0.905);transform-origin:left">Measured by</div>
<div class="t" style="left:737px;top:449.5px;font-size:8.6px;font-weight:bold;color:#3a3a3a;transform:scaleX(0.84);transform-origin:left">Operator1</div>
<div class="a" style="left:544px;top:460.5px;width:256px;height:15px;background:#c6c6c6"></div>
<div class="t" style="left:546px;top:463.5px;font-size:10px;color:#3a3a3a;transform:scaleX(0.905);transform-origin:left">Objective</div>
<div class="t" style="left:739px;top:463.5px;font-size:10px;color:#3a3a3a;transform:scaleX(0.9);transform-origin:left">10 X</div>
<div class="a" style="left:544px;top:475.5px;width:256px;height:15px;background:#e4e4e4"></div>
<div class="t" style="left:546px;top:478.5px;font-size:10px;color:#3a3a3a;transform:scaleX(0.905);transform-origin:left">FOVLens</div>
<div class="t" style="left:738.5px;top:478.5px;font-size:10px;color:#3a3a3a;transform:scaleX(0.9);transform-origin:left">.55 X</div>
<div class="a" style="left:544px;top:490.5px;width:256px;height:15px;background:#c6c6c6"></div>
<div class="t" style="left:546px;top:493.5px;font-size:10px;color:#3a3a3a;transform:scaleX(0.905);transform-origin:left">Sq - Height parameters - ISO 25178</div>
<div class="t" style="left:700px;top:493.5px;width:75.5px;text-align:right;font-size:10px;color:#3a3a3a;transform:scaleX(0.93);transform-origin:right">15.174</div>
<div class="t" style="left:780px;top:493.5px;font-size:10px;color:#3a3a3a;transform:scaleX(0.93);transform-origin:left">nm</div>
<div class="a" style="left:544px;top:505.5px;width:256px;height:15px;background:#e4e4e4"></div>
<div class="t" style="left:546px;top:508.5px;font-size:10px;color:#3a3a3a;transform:scaleX(0.905);transform-origin:left">Sdq - Hybrid parameters - ISO 25178</div>
<div class="t" style="left:700px;top:508.5px;width:75.5px;text-align:right;font-size:10px;color:#3a3a3a;transform:scaleX(0.93);transform-origin:right">0.090</div>
<div class="t" style="left:780px;top:508.5px;font-size:10px;color:#3a3a3a;transform:scaleX(0.93);transform-origin:left">°</div>
<div class="a" style="left:544px;top:520.5px;width:256px;height:15px;background:#c6c6c6"></div>
<div class="t" style="left:546px;top:523.5px;font-size:10px;color:#3a3a3a;transform:scaleX(0.905);transform-origin:left">Ra - Height parameters - ISO 21920 - Mean</div>
<div class="t" style="left:700px;top:523.5px;width:75.5px;text-align:right;font-size:10px;color:#3a3a3a;transform:scaleX(0.93);transform-origin:right">40.854</div>
<div class="t" style="left:780px;top:523.5px;font-size:10px;color:#3a3a3a;transform:scaleX(0.93);transform-origin:left">nm</div>
<div class="a" style="left:544px;top:535.5px;width:256px;height:15px;background:#e4e4e4"></div>
<div class="t" style="left:546px;top:538.5px;font-size:10px;color:#3a3a3a;transform:scaleX(0.905);transform-origin:left">Rz - Height parameters - ISO 21920 - Mean</div>
<div class="t" style="left:700px;top:538.5px;width:75.5px;text-align:right;font-size:10px;color:#3a3a3a;transform:scaleX(0.93);transform-origin:right">305.075</div>
<div class="t" style="left:780px;top:538.5px;font-size:10px;color:#3a3a3a;transform:scaleX(0.93);transform-origin:left">nm</div>
<div class="a" style="left:734px;top:430.5px;width:1px;height:120px;background:#d4d4d4"></div>
<div class="a" style="left:777.5px;top:430.5px;width:1px;height:120px;background:#d4d4d4"></div>

<!-- bars -->
<svg class="a" style="left:736px;top:236px" width="214" height="160" viewBox="736 236 214 160">
<circle cx="873.9" cy="247.6" r="7.2" fill="#f7900a"/>
<path d="M876.3 333.5 L881 338.3 L891.5 328.4" fill="none" stroke="#20b020" stroke-width="2"/>
<text x="802" y="264.5" font-family="Liberation Sans" font-size="12" fill="#f7a030" stroke="#f7a030" stroke-width="0.25" textLength="19.2" lengthAdjust="spacingAndGlyphs">Sdq</text>
<polygon points="806.5,277.4 817,277.4 811.8,287.2" fill="#f79a10"/>
<rect x="740" y="289.8" width="143" height="8" fill="#222"/>
<rect x="740.5" y="290.3" width="53.5" height="7" fill="#22c022"/>
<rect x="794" y="290.3" width="71" height="7" fill="#f7a00a"/>
<rect x="865" y="290.3" width="17.5" height="7" fill="#f01010"/>
<text x="751.8" y="312.8" font-family="Liberation Sans" font-size="12.5" fill="#f7a030" stroke="#f7a030" stroke-width="0.3" textLength="119" lengthAdjust="spacingAndGlyphs">Re-tune turning process</text>
<text x="809.8" y="353" font-family="Liberation Sans" font-size="12" fill="#22c022" stroke="#22c022" stroke-width="0.25" textLength="12.9" lengthAdjust="spacingAndGlyphs">Sq</text>
<polygon points="812,366.5 822.7,366.5 817.3,376.2" fill="#18b018"/>
<rect x="740" y="379" width="152.5" height="8.2" fill="#222"/>
<rect x="740.5" y="379.5" width="18.7" height="7.2" fill="#f01010"/>
<rect x="759.2" y="379.5" width="28.6" height="7.2" fill="#f7a00a"/>
<rect x="787.8" y="379.5" width="56.9" height="7.2" fill="#22c022"/>
<rect x="844.7" y="379.5" width="28.3" height="7.2" fill="#f7a00a"/>
<rect x="873" y="379.5" width="18.5" height="7.2" fill="#f01010"/>
<text x="803" y="273" font-family="Liberation Sans" font-size="5" fill="#222" stroke="#222" stroke-width="0.15">0.090 °</text>
<text x="805.7" y="362" font-family="Liberation Sans" font-size="5" fill="#222" stroke="#222" stroke-width="0.15" textLength="24.3" lengthAdjust="spacingAndGlyphs">15.174 nm</text>
</svg>

<div class="t" style="left:822.6px;top:418.5px;font-size:9px;color:#333">Measured by:</div>
<div class="t" style="left:822.6px;top:442.2px;font-size:9px;color:#333">Signature:</div>
<div class="t" style="left:822.6px;top:466.7px;font-size:9px;color:#333">Date:</div>
<div class="t" style="left:851px;top:466px;font-size:9.8px;color:#333">3/20/2022</div>

<svg class="a" style="left:826px;top:499px" width="96" height="54"><use href="#brk"/></svg>
</body></html>
